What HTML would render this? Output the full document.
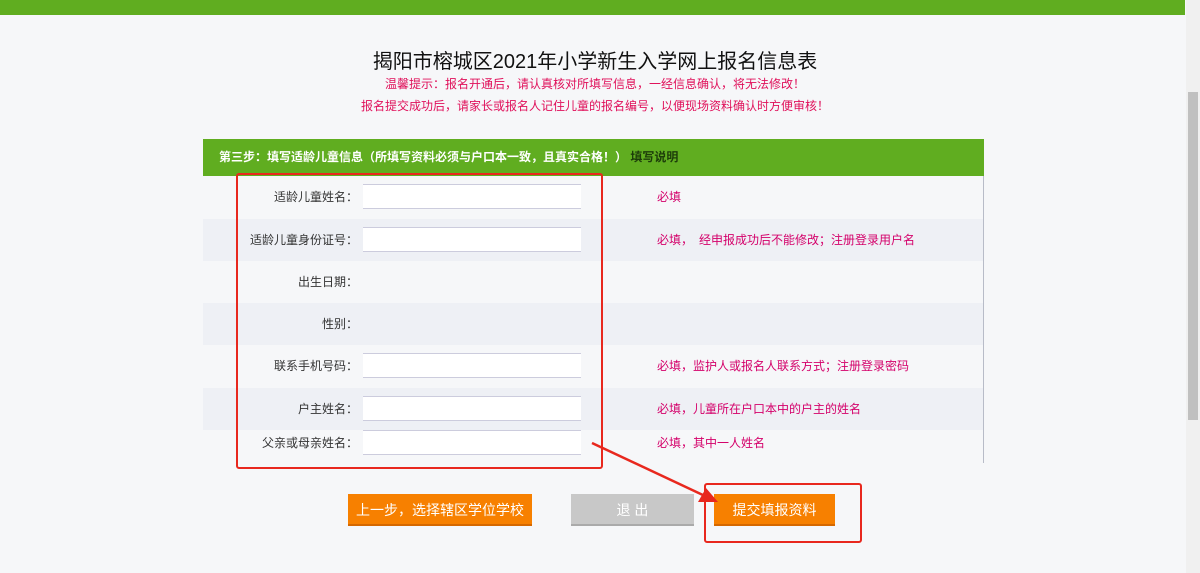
<!DOCTYPE html>
<html><head><meta charset="utf-8"><style>
body{margin:0;width:1200px;height:573px;background:#f6f7f9;font-family:"Liberation Sans","Noto Sans CJK SC",sans-serif;position:relative;overflow:hidden}
.top{position:absolute;left:0;top:0;width:1185px;height:15px;background:#60ad20}
.title{position:absolute;left:0;width:1190px;top:45px;text-align:center;font-size:20px;color:#111}
.tip{position:absolute;width:1190px;text-align:center;font-size:12px;color:#e0105a}
.hdr{position:absolute;left:203px;top:139px;width:781px;height:37px;background:#60ad20;color:#fff;font-size:12px;font-weight:bold;line-height:37px;box-sizing:border-box;padding-left:16px}
.hdr span{color:#1d3d0a}
.row{position:absolute;left:203px;width:781px;height:42px;font-size:12px;color:#333}
.row.alt{background:#eef0f5}
.row .l{position:absolute;right:626px;top:0;line-height:42px}
.row input{position:absolute;left:160px;top:8px;width:218px;height:25px;border:none;border-top:1px solid #ccd;border-bottom:1px solid #ccd;background:#fff;box-sizing:border-box;margin:0}
.row .n{position:absolute;left:454px;line-height:42px;color:#d4006a}
.vline{position:absolute;left:983px;top:176px;width:1px;height:287px;background:#b8bcc8}
.btn{position:absolute;top:494px;height:32px;line-height:32px;text-align:center;color:#fff;font-size:14px;background:#f78000;border-bottom:2px solid #d56800;box-sizing:border-box}
.box{position:absolute;border:2px solid #e8281e;border-radius:3px}
.sb{position:absolute;left:1186px;top:0;width:14px;height:573px;background:#f0f0f0}
.th{position:absolute;left:1188px;top:92px;width:10px;height:328px;background:#c0c0c0}
</style></head><body>
<div class="top"></div>
<div class="title">揭阳市榕城区2021年小学新生入学网上报名信息表</div>
<div class="tip" style="top:75px">温馨提示：报名开通后，请认真核对所填写信息，一经信息确认，将无法修改！</div>
<div class="tip" style="top:97px">报名提交成功后，请家长或报名人记住儿童的报名编号，以便现场资料确认时方便审核！</div>
<div class="hdr">第三步：填写适龄儿童信息（所填写资料必须与户口本一致，且真实合格！） <span>填写说明</span></div>
<div class="row" style="top:176px"><span class="l">适龄儿童姓名：</span><input><span class="n">必填</span></div>
<div class="row alt" style="top:219px"><span class="l">适龄儿童身份证号：</span><input><span class="n">必填，　经申报成功后不能修改；注册登录用户名</span></div>
<div class="row" style="top:261px"><span class="l">出生日期：</span></div>
<div class="row alt" style="top:303px"><span class="l">性别：</span></div>
<div class="row" style="top:345px"><span class="l">联系手机号码：</span><input><span class="n">必填，监护人或报名人联系方式；注册登录密码</span></div>
<div class="row alt" style="top:388px"><span class="l">户主姓名：</span><input><span class="n">必填，儿童所在户口本中的户主的姓名</span></div>
<div class="row" style="top:430px;height:33px"><span class="l" style="line-height:26px">父亲或母亲姓名：</span><input style="top:0"><span class="n" style="line-height:26px">必填，其中一人姓名</span></div>
<div class="vline"></div>
<div class="btn" style="left:348px;width:184px">上一步，选择辖区学位学校</div>
<div class="btn" style="left:571px;width:123px;background:#c8c8c8;border-bottom-color:#aaa">退 出</div>
<div class="btn" style="left:714px;width:121px">提交填报资料</div>
<div class="box" style="left:236px;top:173px;width:363px;height:292px"></div>
<div class="box" style="left:704px;top:483px;width:154px;height:56px"></div>
<svg style="position:absolute;left:0;top:0" width="1200" height="573"><line x1="592" y1="443" x2="705" y2="496" stroke="#e8281e" stroke-width="2.5"/><polygon points="718,502 698,502 706,488" fill="#e8281e"/></svg>
<div class="sb"></div><div class="th"></div>
</body></html>
